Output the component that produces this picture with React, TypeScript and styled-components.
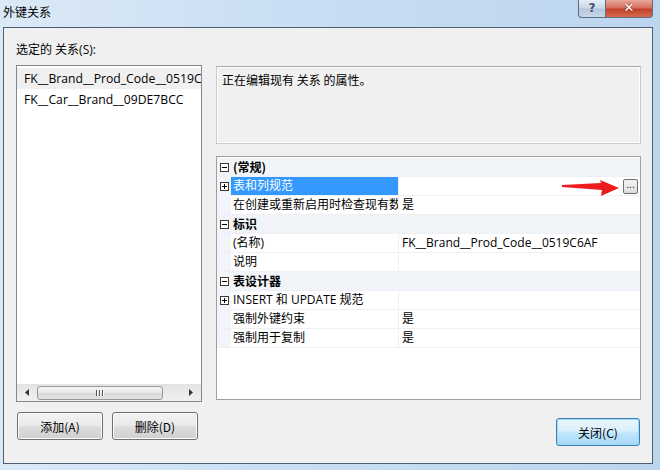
import styled, { createGlobalStyle } from "styled-components";

const GlobalStyle = createGlobalStyle`
  html, body {
    margin: 0;
    padding: 0;
  }
  body {
    font-family: "Open Sans", "Noto Sans CJK SC", sans-serif;
    font-size: 12px;
    color: #000;
  }
`;

const Frame = styled.div`
  width: 660px;
  height: 470px;
  display: flex;
  flex-direction: column;
  background: linear-gradient(90deg, #dbe9f7 0%, #c9def3 45%, #bcd5ee 100%);
  overflow: hidden;
`;

const TitleBar = styled.div`
  height: 27px;
  display: flex;
  align-items: flex-start;
`;

const Caption = styled.div`
  font-family: "Noto Sans CJK SC", sans-serif;
  font-size: 12px;
  line-height: 14px;
  padding: 5px 0 0 3px;
  flex: 1;
`;

const CaptionButton = styled.div<{ $close?: boolean }>`
  width: ${(p) => (p.$close ? 47 : 28)}px;
  height: 18px;
  box-sizing: border-box;
  border: 1px solid #5b6e86;
  border-top: none;
  border-left: ${(p) => (p.$close ? "none" : "1px solid #5b6e86")};
  border-radius: ${(p) => (p.$close ? "0 0 4px 0" : "0 0 0 4px")};
  background: ${(p) =>
    p.$close
      ? "linear-gradient(#e9a99c 0%, #d7705f 45%, #c2402b 55%, #d46b4e 100%)"
      : "linear-gradient(#e4edf7 0%, #cbd9e8 45%, #b5c7dc 55%, #c9d8e8 100%)"};
  color: ${(p) => (p.$close ? "#fff" : "#3d4b5c")};
  font-family: "DejaVu Sans", sans-serif;
  font-weight: bold;
  font-size: ${(p) => (p.$close ? 13 : 12)}px;
  line-height: 16px;
  text-align: center;
  text-shadow: ${(p) => (p.$close ? "0 0 2px #6a1a10" : "0 0 1px #fff")};
`;

const CaptionButtons = styled.div`
  display: flex;
  margin-right: 7px;
`;

const Client = styled.div`
  margin: 0 7px 6px 3px;
  height: 437px;
  box-sizing: border-box;
  border: 1px solid #4e5f73;
  background: #f0f0f0;
  display: grid;
  grid-template-columns: 186px 425px;
  column-gap: 14px;
  padding: 15px 0 0 12px;
  font-family: "Open Sans", "Noto Sans CJK SC", sans-serif;
`;

const Column = styled.div<{ $top?: number }>`
  display: flex;
  flex-direction: column;
  padding-top: ${(p) => p.$top ?? 0}px;
`;

const Label = styled.div`
  line-height: 14px;
  height: 14px;
  white-space: nowrap;
`;

const ListBox = styled.div`
  margin-top: 8px;
  height: 337px;
  box-sizing: border-box;
  border: 1px solid #828790;
  background: #fff;
  display: flex;
  flex-direction: column;
`;

const ListItems = styled.div`
  flex: 1;
  padding-top: 2px;
  overflow: hidden;
`;

const ListItem = styled.div<{ $selected?: boolean }>`
  height: 21px;
  line-height: 21px;
  padding-left: 7px;
  white-space: nowrap;
  overflow: hidden;
  background: ${(p) => (p.$selected ? "#f0f0f0" : "transparent")};
  font-size: 12.2px;
`;

const HScroll = styled.div`
  height: 17px;
  display: flex;
  align-items: center;
  background: linear-gradient(#e3e3e3, #f1f1f1);
`;

const ScrollArrow = styled.div`
  width: 20px;
  display: flex;
  justify-content: center;
  align-items: center;
`;

const Thumb = styled.div`
  width: 126px;
  height: 14px;
  box-sizing: border-box;
  border: 1px solid #979797;
  border-radius: 3px;
  background: linear-gradient(#f5f5f5 0%, #e6e6e6 50%, #d9d9d9 51%, #e4e4e4 100%);
  display: flex;
  justify-content: center;
  align-items: center;
  gap: 1px;
`;

const Grip = styled.span`
  width: 1px;
  height: 6px;
  background: #555;
  border-right: 1px solid #fff;
`;

const ScrollSpacer = styled.div`
  flex: 1;
`;

const ButtonRow = styled.div<{ $end?: boolean }>`
  margin-top: ${(p) => (p.$end ? 18 : 10)}px;
  display: flex;
  justify-content: ${(p) => (p.$end ? "flex-end" : "flex-start")};
  gap: 9px;
  padding: ${(p) => (p.$end ? "0 1px 0 0" : "0 0 0 1px")};
`;

const PushButton = styled.button<{ $focus?: boolean }>`
  width: ${(p) => (p.$focus ? 84 : 86)}px;
  height: 28px;
  box-sizing: border-box;
  border: 1px solid ${(p) => (p.$focus ? "#3c7fb1" : "#707070")};
  border-radius: 3px;
  background: ${(p) =>
    p.$focus
      ? "linear-gradient(#eaf6fd 0%, #d9f0fc 45%, #bee6fd 55%, #a7d9f5 100%)"
      : "linear-gradient(#f2f2f2 0%, #ebebeb 45%, #dddddd 55%, #cfcfcf 100%)"};
  box-shadow: inset 0 0 0 1px ${(p) => (p.$focus ? "#9fdcf9" : "#fcfcfc")};
  font-family: "Noto Sans CJK SC", sans-serif;
  font-size: 12px;
  color: #000;
  padding: 0;
`;

const Description = styled.div`
  height: 78px;
  box-sizing: border-box;
  border: 1px solid #c9cdd1;
  border-top-color: #a9a9a9;
  box-shadow: inset 0 0 0 1px #fcfcfc;
  padding: 6px 5px;
  line-height: 14px;
  font-family: "Noto Sans CJK SC", sans-serif;
`;

const PropGrid = styled.div`
  position: relative;
  margin-top: 12px;
  height: 244px;
  box-sizing: border-box;
  border: 1px solid #a0a0a0;
  background: #fff;
  padding-top: 1px;
`;

const Row = styled.div<{ $category?: boolean }>`
  display: grid;
  grid-template-columns: ${(p) => (p.$category ? "14px 1fr" : "14px 168px 1fr")};
  height: 19px;
  box-sizing: border-box;
  border-bottom: 1px solid #edf0f5;
  background: ${(p) => (p.$category ? "#f1f4f9" : "#fff")};
  font-weight: ${(p) => (p.$category ? "bold" : "normal")};
  line-height: 18px;
`;

const Gutter = styled.div`
  background: #f1f4f9;
  display: flex;
  align-items: center;
  justify-content: center;
`;

const ExpandBox = styled.div`
  width: 9px;
  height: 9px;
  box-sizing: border-box;
  border: 1px solid #3a3a3a;
  background: #fff;
  position: relative;
  &::before {
    content: "";
    position: absolute;
    left: 1px;
    top: 3px;
    width: 5px;
    height: 1px;
    background: #000;
  }
`;

const PlusBox = styled(ExpandBox)`
  &::after {
    content: "";
    position: absolute;
    left: 3px;
    top: 1px;
    width: 1px;
    height: 5px;
    background: #000;
  }
`;

const NameCell = styled.div<{ $selected?: boolean }>`
  padding-left: 2px;
  white-space: nowrap;
  overflow: hidden;
  border-right: 1px solid #edf0f5;
  background: ${(p) => (p.$selected ? "#3399ff" : "transparent")};
  color: ${(p) => (p.$selected ? "#fff" : "#000")};
`;

const CategoryName = styled.div`
  padding-left: 2px;
  font-family: "Noto Sans CJK SC", sans-serif;
`;

const ValueCell = styled.div`
  padding-left: 3px;
  white-space: nowrap;
  overflow: hidden;
  display: flex;
  align-items: center;
  justify-content: space-between;
`;

const EllipsisButton = styled.div`
  width: 15px;
  height: 15px;
  box-sizing: border-box;
  margin-right: 2px;
  border: 1px solid #707070;
  border-radius: 2px;
  background: linear-gradient(#f4f4f4, #dcdcdc);
  font-size: 9px;
  line-height: 11px;
  text-align: center;
  font-family: "DejaVu Sans", sans-serif;
`;

const Arrow = styled.svg`
  position: absolute;
  left: 345px;
  top: 23px;
`;

type PropRow = {
  label: string;
  category?: boolean;
  expand?: boolean;
  selected?: boolean;
  value?: string;
  button?: boolean;
};

const rows: PropRow[] = [
  { label: "(常规)", category: true },
  { label: "表和列规范", expand: true, selected: true, button: true },
  { label: "在创建或重新启用时检查现有数据", value: "是" },
  { label: "标识", category: true },
  { label: "(名称)", value: "FK__Brand__Prod_Code__0519C6AF" },
  { label: "说明" },
  { label: "表设计器", category: true },
  { label: "INSERT 和 UPDATE 规范", expand: true },
  { label: "强制外键约束", value: "是" },
  { label: "强制用于复制", value: "是" },
];

export default function App() {
  return (
    <>
      <GlobalStyle />
      <Frame>
        <TitleBar>
          <Caption>外键关系</Caption>
          <CaptionButtons>
            <CaptionButton>?</CaptionButton>
            <CaptionButton $close>✕</CaptionButton>
          </CaptionButtons>
        </TitleBar>
        <Client>
          <Column>
            <Label>选定的 关系(S):</Label>
            <ListBox>
              <ListItems>
                <ListItem $selected>FK__Brand__Prod_Code__0519C6AF</ListItem>
                <ListItem>FK__Car__Brand__09DE7BCC</ListItem>
              </ListItems>
              <HScroll>
                <ScrollArrow>
                  <svg width="4" height="7" viewBox="0 0 4 7">
                    <path d="M4 0 L0 3.5 L4 7 Z" fill="#333" />
                  </svg>
                </ScrollArrow>
                <Thumb>
                  <Grip />
                  <Grip />
                  <Grip />
                </Thumb>
                <ScrollSpacer />
                <ScrollArrow>
                  <svg width="4" height="7" viewBox="0 0 4 7">
                    <path d="M0 0 L4 3.5 L0 7 Z" fill="#333" />
                  </svg>
                </ScrollArrow>
              </HScroll>
            </ListBox>
            <ButtonRow>
              <PushButton>添加(A)</PushButton>
              <PushButton>删除(D)</PushButton>
            </ButtonRow>
          </Column>
          <Column $top={23}>
            <Description>正在编辑现有 关系 的属性。</Description>
            <PropGrid>
              {rows.map((r) =>
                r.category ? (
                  <Row $category key={r.label}>
                    <Gutter>
                      <ExpandBox />
                    </Gutter>
                    <CategoryName>{r.label}</CategoryName>
                  </Row>
                ) : (
                  <Row key={r.label}>
                    <Gutter>{r.expand && <PlusBox />}</Gutter>
                    <NameCell $selected={r.selected}>{r.label}</NameCell>
                    <ValueCell>
                      <span>{r.value ?? ""}</span>
                      {r.button && <EllipsisButton>...</EllipsisButton>}
                    </ValueCell>
                  </Row>
                )
              )}
              <Arrow width="60" height="18" viewBox="0 0 60 18">
                <polygon
                  points="0,5 39,3 38,0 57,8 39,16 40,10 0,7"
                  fill="#ee1c1c"
                />
              </Arrow>
            </PropGrid>
            <ButtonRow $end>
              <PushButton $focus>关闭(C)</PushButton>
            </ButtonRow>
          </Column>
        </Client>
      </Frame>
    </>
  );
}
